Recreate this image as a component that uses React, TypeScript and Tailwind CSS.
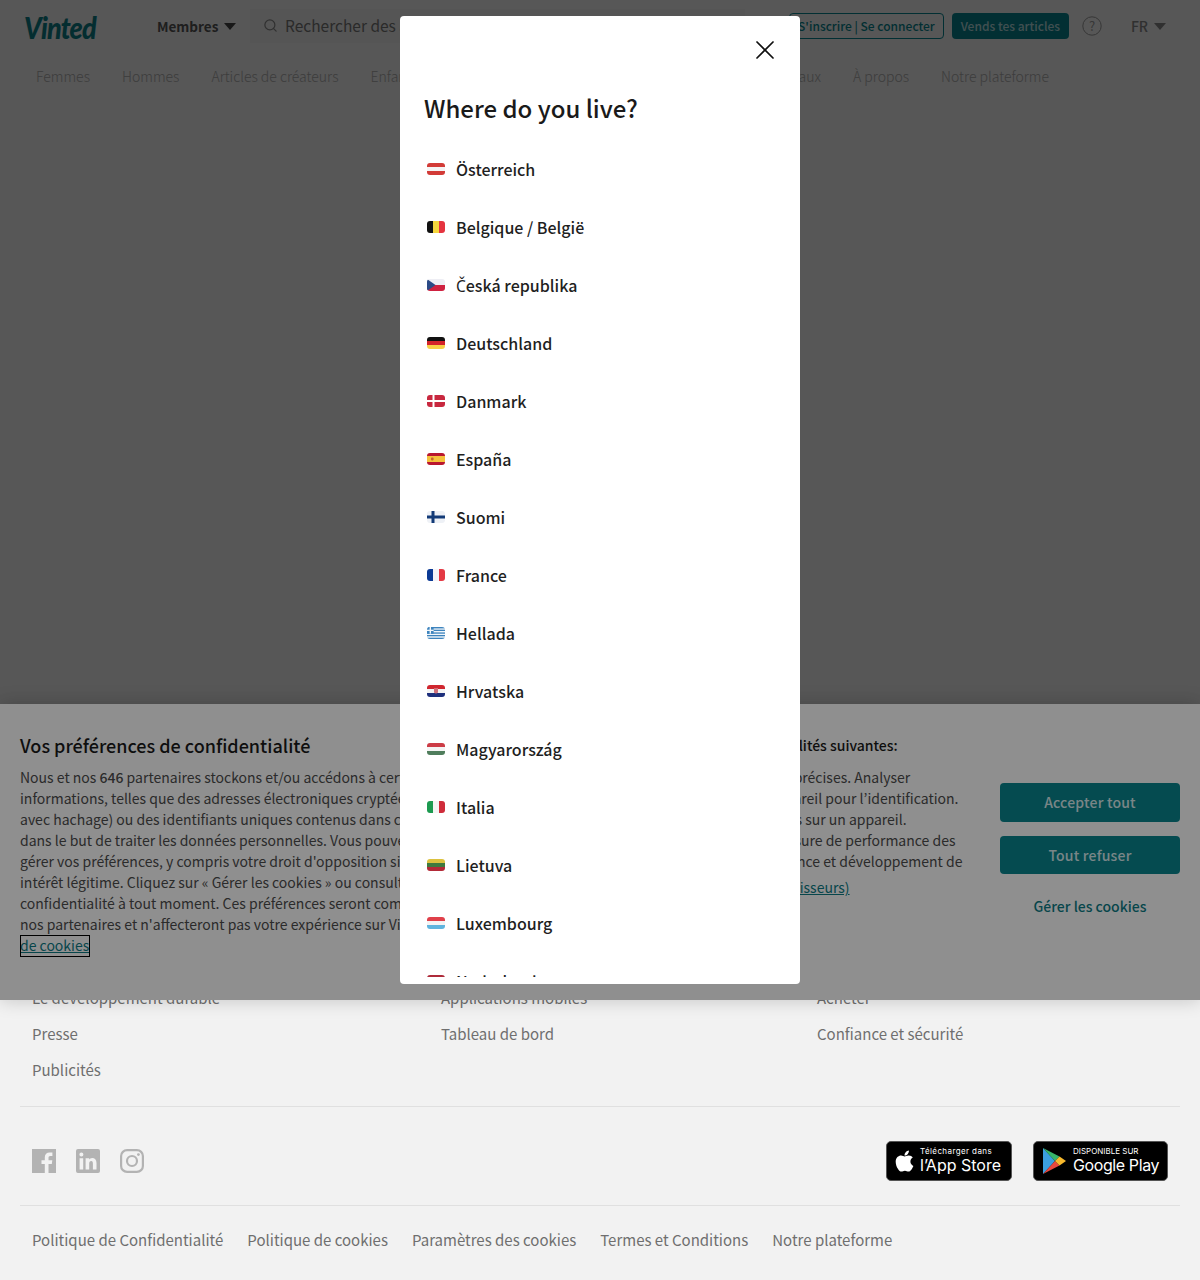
import React from 'react';
import { Search, X } from 'lucide-react';
import { FaApple } from 'react-icons/fa';

const Stripes = ({ colors }: { colors: string[] }) => (
  <svg viewBox="0 0 18 12" className="block w-full h-full" preserveAspectRatio="none">
    {colors.map((c, i) => (
      <rect key={i} x="0" y={(i * 12) / colors.length} width="18" height={12 / colors.length + 0.1} fill={c} />
    ))}
  </svg>
);

const Bars = ({ colors }: { colors: string[] }) => (
  <svg viewBox="0 0 18 12" className="block w-full h-full" preserveAspectRatio="none">
    {colors.map((c, i) => (
      <rect key={i} x={i * 6} y="0" width="6.1" height="12" fill={c} />
    ))}
  </svg>
);

const countries: { name: React.ReactNode; flag: React.ReactNode }[] = [
  { name: 'Österreich', flag: <Stripes colors={['#d23b37', '#f4f4f4', '#d23b37']} /> },
  { name: 'Belgique / België', flag: <Bars colors={['#111111', '#f5d63d', '#e5343f']} /> },
  {
    name: (
      <span className="translate-y-px">
        <span className="font-['Noto_Sans',sans-serif] text-[15.5px] font-normal">{'\u010C'}</span>
        {'esk\u00E1 republika'}
      </span>
    ),
    flag: (
      <svg viewBox="0 0 18 12" className="block w-full h-full">
        <rect width="18" height="6" fill="#eeeef4" />
        <rect y="6" width="18" height="6" fill="#cf2140" />
        <path d="M0 0 L8.5 6 L0 12 Z" fill="#2b4a86" />
      </svg>
    ),
  },
  { name: 'Deutschland', flag: <Stripes colors={['#111111', '#d3222a', '#f7cf46']} /> },
  {
    name: 'Danmark',
    flag: (
      <svg viewBox="0 0 18 12" className="block w-full h-full">
        <rect width="18" height="12" fill="#c8283f" />
        <rect x="5.5" width="2" height="12" fill="#fff" />
        <rect y="5" width="18" height="2" fill="#fff" />
      </svg>
    ),
  },
  {
    name: 'España',
    flag: (
      <svg viewBox="0 0 18 12" className="block w-full h-full">
        <rect width="18" height="12" fill="#b9172f" />
        <rect y="3" width="18" height="6" fill="#f5c13c" />
        <rect x="4" y="4.6" width="2.6" height="2.8" rx="0.8" fill="#c8642e" />
      </svg>
    ),
  },
  {
    name: 'Suomi',
    flag: (
      <svg viewBox="0 0 18 12" className="block w-full h-full">
        <rect width="18" height="12" fill="#eef1f6" />
        <rect x="4.5" width="3" height="12" fill="#123a77" />
        <rect y="4.5" width="18" height="3" fill="#123a77" />
      </svg>
    ),
  },
  { name: 'France', flag: <Bars colors={['#0b3a94', '#f4f4f8', '#e43a45']} /> },
  {
    name: 'Hellada',
    flag: (
      <svg viewBox="0 0 18 12" className="block w-full h-full">
        <rect width="18" height="12" fill="#f1f6fa" />
        <rect y="0" width="18" height="1.4" fill="#3c83bd" />
        <rect y="2.7" width="18" height="1.3" fill="#3c83bd" />
        <rect y="5.4" width="18" height="1.3" fill="#3c83bd" />
        <rect y="8" width="18" height="1.3" fill="#3c83bd" />
        <rect y="10.7" width="18" height="1.3" fill="#3c83bd" />
        <rect width="6.6" height="6.7" fill="#3c83bd" />
        <rect x="2.6" width="1.4" height="6.7" fill="#f1f6fa" />
        <rect y="2.7" width="6.6" height="1.3" fill="#f1f6fa" />
      </svg>
    ),
  },
  {
    name: 'Hrvatska',
    flag: (
      <svg viewBox="0 0 18 12" className="block w-full h-full">
        <rect width="18" height="4" fill="#d0262f" />
        <rect y="4" width="18" height="4" fill="#f4f4f4" />
        <rect y="8" width="18" height="4" fill="#1d2f7c" />
        <path d="M7 3 H11 V7.5 Q9 9.6 7 7.5 Z" fill="#d0707a" />
      </svg>
    ),
  },
  { name: 'Magyarország', flag: <Stripes colors={['#cc3c46', '#f4f4f4', '#4f7d5c']} /> },
  { name: 'Italia', flag: <Bars colors={['#1c9a50', '#f4f4f4', '#cf2c3a']} /> },
  { name: 'Lietuva', flag: <Stripes colors={['#dcc23f', '#3f7a3f', '#b32a38']} /> },
  { name: 'Luxembourg', flag: <Stripes colors={['#e0404a', '#f4f4f4', '#5fb4de']} /> },
  { name: 'Nederland', flag: <Stripes colors={['#ae2b3a', '#f4f4f4', '#24468c']} /> },
];

const navItems = ['Femmes', 'Hommes', 'Articles de créateurs', 'Enfants', 'Maison', 'Électronique', 'Divertissement', 'Animaux', 'À propos', 'Notre plateforme'];

const footerColumns = [
  ['Le développement durable', 'Presse', 'Publicités'],
  ['Applications mobiles', 'Tableau de bord'],
  ['Acheter', 'Confiance et sécurité'],
];

const bottomLinks = ['Politique de Confidentialité', 'Politique de cookies', 'Paramètres des cookies', 'Termes et Conditions', 'Notre plateforme'];

export default function App() {
  return (
    <div className="relative min-h-[1280px] flex flex-col bg-[#f2f2f2] overflow-hidden font-['Noto_Sans_CJK_JP','Noto_Sans',sans-serif]">
      <header className="h-[52px] flex items-center pl-6 pr-[34px]">
        <span className="w-[133px] text-[27px] leading-none font-black italic text-[#0d7d87] font-['Lato',sans-serif] tracking-[-0.8px] scale-y-[1.15] origin-left">Vinted</span>
        <span className="w-[93px] flex items-center text-[13.5px] font-bold text-[#555555]">
          Membres
          <svg viewBox="0 0 12 7" className="w-3 h-[7px] ml-[6px]"><path d="M0 0 H12 L6 7 Z" fill="#444444" /></svg>
        </span>
        <div className="w-[495px] h-[34px] flex items-center pl-[13px] pb-[1px] text-[15.5px] text-[#777777] bg-[#eeeeee]">
          <Search className="w-[15px] h-[15px] mr-[7px] text-[#888888]" />
          <span>Rechercher des articles</span>
        </div>
        <div className="ml-auto flex items-center">
          <span className="w-[155px] h-[26px] flex items-center justify-center whitespace-nowrap rounded-[4px] border border-[#09868f] text-[12px] font-medium text-[#09868f]">S'inscrire | Se connecter</span>
          <span className="ml-[8px] w-[117px] h-[26px] flex items-center justify-center whitespace-nowrap rounded-[4px] bg-[#09868f] text-[12px] font-medium text-[#b8dfe2]">Vends tes articles</span>
          <svg viewBox="0 0 20 20" className="ml-[13px] w-5 h-5 text-[#999999]">
            <circle cx="10" cy="10" r="9.2" fill="none" stroke="currentColor" strokeWidth="1" />
            <text x="10" y="14.5" textAnchor="middle" fontSize="13" fill="currentColor">?</text>
          </svg>
          <span className="ml-[29px] text-[14px] font-medium text-[#888888]">FR</span>
          <svg viewBox="0 0 12 7" className="ml-[6px] w-3 h-[7px]"><path d="M0 0 H12 L6 7 Z" fill="#888888" /></svg>
        </div>
      </header>

      <nav className="h-[48px] flex items-center gap-8 pl-9 text-[14px] font-light leading-5 text-[#aaaaaa]">
        {navItems.map((item) => (
          <span key={item}>{item}</span>
        ))}
      </nav>

      <main className="flex-1" />

      <footer className="mx-5">
        <div className="grid grid-cols-[409px_376px_1fr] pl-3 pb-[26px]">
          {footerColumns.map((col, i) => (
            <ul key={i} className="flex flex-col gap-[16px] text-[15px] leading-5 text-[#6f6f6f]">
              {col.map((link) => (
                <li key={link}>{link}</li>
              ))}
            </ul>
          ))}
        </div>
        <div className="h-[100px] pt-[10px] flex items-center justify-between px-3 border-t border-b border-[#e0e0e0]">
          <div className="flex items-center gap-5 text-[#b3b3b3]">
            <svg viewBox="0 0 24 24" className="w-6 h-6">
              <path fill="currentColor" d="M0 0 H24 V24 H16.5 V15 H19.8 L20.3 11.2 H16.5 V8.9 C16.5 7.8 16.9 7 18.4 7 H20.4 V3.6 C20 3.5 18.9 3.4 17.6 3.4 C14.8 3.4 12.8 5.1 12.8 8.3 V11.2 H9.5 V15 H12.8 V24 H0 Z" />
            </svg>
            <svg viewBox="0 0 24 24" className="w-6 h-6">
              <path fill="currentColor" fillRule="evenodd" d="M2 0 H22 A2 2 0 0 1 24 2 V22 A2 2 0 0 1 22 24 H2 A2 2 0 0 1 0 22 V2 A2 2 0 0 1 2 0 Z M3.6 9.2 V20.4 H7.2 V9.2 Z M5.4 3.6 A2 2 0 1 0 5.4 7.6 A2 2 0 1 0 5.4 3.6 Z M9.6 9.2 V20.4 H13.2 V14.6 C13.2 13 13.9 12 15.2 12 C16.5 12 16.9 13 16.9 14.6 V20.4 H20.5 V13.9 C20.5 10.5 18.7 8.9 16.3 8.9 C14.7 8.9 13.7 9.7 13.2 10.6 V9.2 Z" />
            </svg>
            <svg viewBox="0 0 24 24" className="w-6 h-6" fill="none" stroke="currentColor" strokeWidth="2.2">
              <rect x="1.1" y="1.1" width="21.8" height="21.8" rx="6" />
              <circle cx="12" cy="12" r="5" />
              <circle cx="18.4" cy="5.6" r="1.4" fill="currentColor" stroke="none" />
            </svg>
          </div>
          <div className="flex items-center gap-[21px] text-white font-['Inter',sans-serif]">
            <div className="w-[126px] h-10 flex items-center pl-[7px] rounded-[5px] bg-black border border-[#555555]">
              <FaApple className="w-[21px] h-[24px] mr-[5px]" />
              <div className="flex flex-col pb-[2px]">
                <span className="text-[8px] leading-[10px] tracking-[0.4px]">Télécharger dans</span>
                <span className="text-[16px] leading-[19px]">l’App Store</span>
              </div>
            </div>
            <div className="w-[135px] h-10 flex items-center pl-[8px] rounded-[5px] bg-black border border-[#555555]">
              <svg viewBox="0 0 24 28" className="w-[24px] h-[28px] mr-[7px]">
                <path d="M1 1 L13 14 L1 27 Z" fill="#3b9fe0" />
                <path d="M1 1 L17.5 9.5 L13 14 Z" fill="#37b66b" />
                <path d="M1 27 L17.5 18.5 L13 14 Z" fill="#e8483f" />
                <path d="M17.5 9.5 L24 14 L17.5 18.5 L13 14 Z" fill="#f7b92d" />
              </svg>
              <div className="flex flex-col pb-[2px]">
                <span className="text-[8px] leading-[10px]">DISPONIBLE SUR</span>
                <span className="text-[16px] leading-[19px] tracking-[-0.4px]">Google Play</span>
              </div>
            </div>
          </div>
        </div>
        <div className="h-[68px] mb-[6px] flex items-center gap-6 px-3 text-[15px] leading-5 text-[#6f6f6f]">
          {bottomLinks.map((link) => (
            <span key={link}>{link}</span>
          ))}
        </div>
      </footer>

      {/* page dim, under the cookie banner */}
      <div className="absolute inset-x-0 top-0 h-[1000px] bg-black/[0.36]" />

      {/* cookie banner */}
      <section className="absolute inset-x-0 top-[704px] h-[296px] flex bg-white pl-5 pr-5 shadow-[0_0_18px_rgba(0,0,0,0.2)] text-[14px] leading-[21px] text-[#4d4d4d]">
        <div className="w-[516px] shrink-0 pt-[29px] whitespace-nowrap">
          <h2 className="text-[18px] leading-6 font-medium text-[#1a1a1a] mb-[10px]">Vos préférences de confidentialité</h2>
          <p>
            Nous et nos <b className="font-medium">646</b> partenaires stockons et/ou accédons à certaines<br />
            informations, telles que des adresses électroniques cryptées<br />
            avec hachage) ou des identifiants uniques contenus dans cookies<br />
            dans le but de traiter les données personnelles. Vous pouvez<br />
            gérer vos préférences, y compris votre droit d'opposition si<br />
            intérêt légitime. Cliquez sur « Gérer les cookies » ou consultez<br />
            confidentialité à tout moment. Ces préférences seront communiquées à<br />
            nos partenaires et n'affecteront pas votre expérience sur Vinted.<br />
            <a className="underline text-[#0d7d87] pr-px pb-[2px] outline outline-1 -outline-offset-1 outline-black">de cookies</a>
          </p>
        </div>
        <div className="w-[440px] shrink-0 pt-[31px] whitespace-nowrap">
          <h3 className="text-[14px] leading-5 font-medium text-[#1a1a1a] mb-[12px]">Nos partenaires et nous suivons les finalités suivantes:</h3>
          <p>
            Utiliser des données de géolocalisation précises. Analyser<br />
            activement les caractéristiques de l'appareil pour l’identification.<br />
            Stocker et/ou accéder à des informations sur un appareil.<br />
            Publicités et contenu personnalisés, mesure de performance des<br />
            publicités et du contenu, études d'audience et développement de
          </p>
          <a className="block mt-[5px] ml-[9px] underline text-[#0d7d87]">Accéder à la liste des partenaires (fournisseurs)</a>
        </div>
        <div className="ml-auto w-[180px] pt-[79px] flex flex-col">
          <button className="h-[39px] rounded-[4px] bg-[#09868f] text-[#d9eef0] text-[14px] tracking-[0.2px] font-medium">Accepter tout</button>
          <button className="mt-[14px] h-[38px] rounded-[4px] bg-[#09868f] text-[#d9eef0] text-[14px] tracking-[0.2px] font-medium">Tout refuser</button>
          <button className="mt-[21px] h-[22px] text-[#0d7d87] text-[14px] font-medium">Gérer les cookies</button>
        </div>
      </section>

      {/* modal dim, over the cookie banner */}
      <div className="absolute inset-x-0 top-0 h-[1000px] bg-black/[0.44]" />

      {/* country picker */}
      <div className="absolute left-[400px] top-4 w-[400px] h-[968px] flex flex-col rounded-[4px] bg-white overflow-hidden">
        <div className="flex justify-end pt-[18px] pr-[19px] h-[60px] shrink-0">
          <X className="w-8 h-8 text-[#111111]" strokeWidth={1.3} />
        </div>
        <h1 className="pl-6 mt-[14px] text-[24px] leading-9 font-medium text-[#1a1a1a]">Where do you live?</h1>
        <ul className="mt-[14px] mb-[7px] flex-1 min-h-0 overflow-hidden">
          {countries.map((c, i) => (
            <li key={i} className="h-[58px] flex items-center pl-[27px] text-[16px] font-medium text-[#1f1f1f]">
              <span className="w-[18px] h-[12px] mr-[11px] rounded-[3px] overflow-hidden shrink-0">{c.flag}</span>
              {c.name}
            </li>
          ))}
        </ul>
      </div>
    </div>
  );
}
